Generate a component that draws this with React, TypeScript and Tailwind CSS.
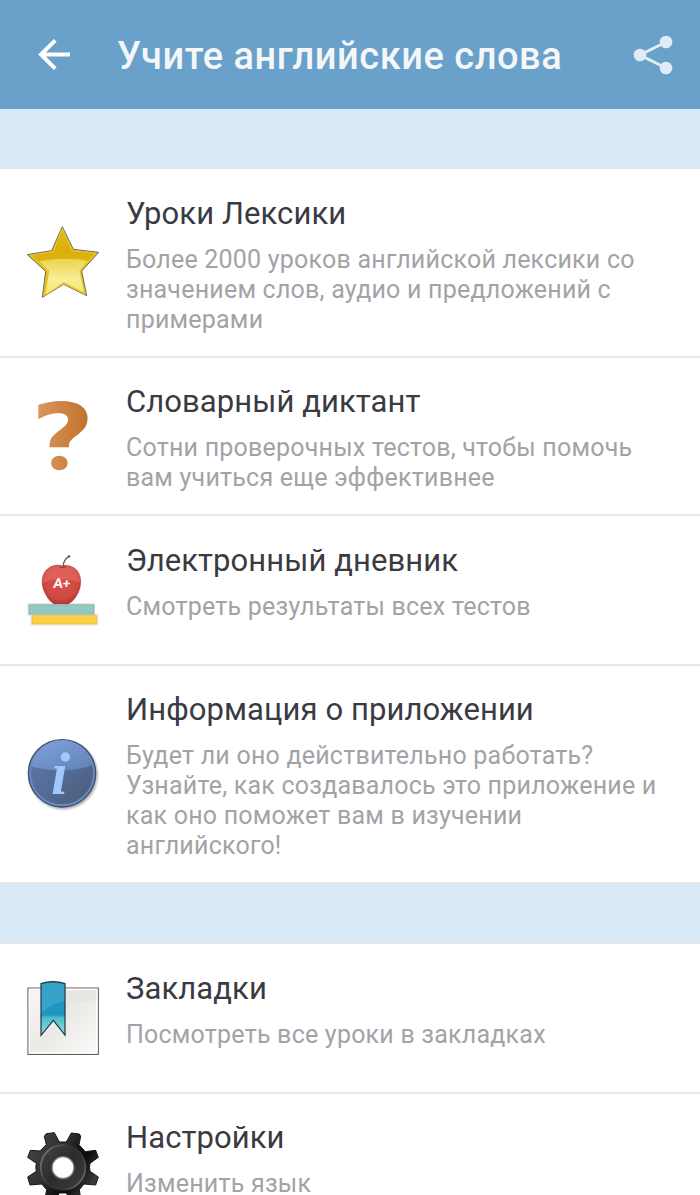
import type { ReactNode } from 'react';

interface MenuRowProps {
  icon: ReactNode;
  title: string;
  children: ReactNode;
}

function BackIcon() {
  return (
    <svg viewBox="0 0 32 32" className="h-8 w-8" fill="none" stroke="#fff" strokeWidth="4">
      <path d="M32 15.5H4M17.2 1.4 3 15.5l14.2 14.2" />
    </svg>
  );
}

function ShareIcon() {
  return (
    <svg viewBox="0 0 40 40" className="h-10 w-10" fill="#e0ecf5" stroke="#e0ecf5">
      <path d="M33 7 7 20l26 13" fill="none" strokeWidth="3" />
      <circle cx="33" cy="7" r="6.3" stroke="none" />
      <circle cx="7" cy="20" r="6.3" stroke="none" />
      <circle cx="33" cy="33" r="6.3" stroke="none" />
    </svg>
  );
}

function StarIcon() {
  return (
    <svg viewBox="51 48 216 216" className="h-[72px] w-[72px] overflow-visible">
      <defs>
        <linearGradient id="star-base" x1="0" y1="0" x2="0" y2="1">
          <stop offset="0" stopColor="#e3bb1e" />
          <stop offset="0.35" stopColor="#dcae08" />
          <stop offset="1" stopColor="#e6c832" />
        </linearGradient>
        <linearGradient id="star-glow" x1="0" y1="0" x2="0" y2="1">
          <stop offset="0" stopColor="#ecd44e" />
          <stop offset="0.5" stopColor="#f8ee96" />
          <stop offset="1" stopColor="#f3e25c" />
        </linearGradient>
        <clipPath id="star-clip">
          <path d="m157 62 26 61 68 9-43 51 14 64-61-30-54 36 10-70-48-47 63-10z" />
        </clipPath>
      </defs>
      <path
        d="m157 50 33 68 76 9-51 56 15 74-69-34-64 39 10-78-55-50 73-12z"
        fill="url(#star-base)"
        stroke="#6b6764"
        strokeWidth="3"
      />
      <path
        d="m157 57 30 64 70 9-47 53 14 68-63-31-58 36 9-73-51-47 68-11z"
        fill="none"
        stroke="#e6c429"
        strokeWidth="4"
      />
      <path d="M50 164q108-34 218-4v110H50z" fill="url(#star-glow)" clipPath="url(#star-clip)" />
    </svg>
  );
}

function QuestionIcon() {
  return (
    <svg viewBox="51 45 216 216" className="h-[72px] w-[72px] overflow-visible">
      <defs>
        <linearGradient id="question-fill" x1="87" y1="0" x2="235" y2="0" gradientUnits="userSpaceOnUse">
          <stop offset="0.05" stopColor="#d99a63" />
          <stop offset="1" stopColor="#c06c26" />
        </linearGradient>
        <linearGradient id="question-text" x1="0" y1="0" x2="1" y2="0">
          <stop offset="0.05" stopColor="#d99a63" />
          <stop offset="1" stopColor="#c06c26" />
        </linearGradient>
        <clipPath id="question-hook">
          <path d="M51 30h216v166H51z" />
        </clipPath>
      </defs>
      <g clipPath="url(#question-hook)">
        <text
          transform="translate(62 255) scale(1.19 1)"
          fontFamily="DejaVu Sans"
          fontWeight="700"
          fontSize="278"
          fill="url(#question-text)"
        >
          ?
        </text>
      </g>
      <ellipse cx="148" cy="234" rx="25" ry="22" fill="url(#question-fill)" />
    </svg>
  );
}

function AppleIcon() {
  return (
    <svg viewBox="51 42 216 216" className="h-[72px] w-[72px] overflow-visible">
      <defs>
        <radialGradient id="apple-fill" cx="0.5" cy="0.45" r="0.6">
          <stop offset="0" stopColor="#dc5049" />
          <stop offset="0.7" stopColor="#cf4943" />
          <stop offset="1" stopColor="#a92f2c" />
        </radialGradient>
      </defs>
      <path d="M55 192h197v32h10v30H64v-29h-9z" fill="none" stroke="#f1ebe4" strokeWidth="7" />
      <path
        d="M157 77c-20-6-39 2-50 15-14 17-13 42-5 61 7 16 17 33 31 39h41c14-5 26-22 33-39 8-20 8-44-5-61-10-12-27-19-45-15z"
        fill="url(#apple-fill)"
        stroke="#a33a36"
        strokeWidth="1"
      />
      <path
        d="M97 130c-1-24 12-45 33-52 9-3 18-2 27 1 10-3 26-1 37 7 13 10 18 25 18 42-32-14-83-16-115 2z"
        fill="#f08078"
        opacity="0.4"
      />
      <path d="M148 81q10 3 20-1" fill="none" stroke="#87332c" strokeWidth="3" />
      <path d="M159 81q1-22 18-32" fill="none" stroke="#6c5b45" strokeWidth="4" />
      <circle cx="177" cy="49" r="3.5" fill="#5a4a39" />
      <text
        transform="translate(129 145) skewX(-6)"
        fontFamily="Lato"
        fontWeight="900"
        fontSize="40"
        fill="#fff"
      >
        A+
      </text>
      <path d="M57 194h195v29H57z" fill="#92c9c3" stroke="#75aaa0" strokeWidth="2" />
      <path d="M66 226h194v26H66z" fill="#fbd045" stroke="#edb336" strokeWidth="2" />
    </svg>
  );
}

function InfoIcon() {
  return (
    <svg viewBox="51 52 216 216" className="h-[72px] w-[72px] overflow-visible">
      <defs>
        <linearGradient id="info-base" x1="0" y1="0" x2="1" y2="1">
          <stop offset="0" stopColor="#5d7bb0" />
          <stop offset="1" stopColor="#4c5c78" />
        </linearGradient>
        <linearGradient id="info-shine" x1="0" y1="0" x2="0.8" y2="1">
          <stop offset="0" stopColor="#7fa3dc" />
          <stop offset="1" stopColor="#6485b8" />
        </linearGradient>
        <radialGradient id="info-shadow">
          <stop offset="0.88" stopColor="#777" stopOpacity="0.7" />
          <stop offset="1" stopColor="#999" stopOpacity="0" />
        </radialGradient>
      </defs>
      <circle cx="160" cy="163" r="109" fill="url(#info-shadow)" />
      <circle cx="156" cy="158" r="101" fill="#6489c4" stroke="#435065" strokeWidth="4" />
      <circle cx="156" cy="158" r="93" fill="url(#info-base)" />
      <path d="M64 137a93 93 0 0 1 183-4c-48 20-130 21-183 4z" fill="url(#info-shine)" />
      <circle cx="166" cy="109" r="14" fill="#a1c7ff" />
      <text
        transform="translate(124 220) scale(0.98 1)"
        fontFamily="Liberation Serif"
        fontWeight="700"
        fontStyle="italic"
        fontSize="182"
        fill="#a1c7ff"
      >
        ı
      </text>
    </svg>
  );
}

function BookmarkIcon() {
  return (
    <svg viewBox="51 51 216 216" className="h-[72px] w-[72px] overflow-visible">
      <defs>
        <linearGradient id="page-fill" x1="0" y1="0" x2="1" y2="1">
          <stop offset="0" stopColor="#f8f7f4" />
          <stop offset="0.5" stopColor="#eceae6" />
          <stop offset="1" stopColor="#fbfaf9" />
        </linearGradient>
        <linearGradient id="ribbon-fill" x1="0" y1="0" x2="0" y2="1">
          <stop offset="0" stopColor="#238eb8" />
          <stop offset="0.62" stopColor="#2196c3" />
          <stop offset="0.67" stopColor="#4dbdcc" />
          <stop offset="1" stopColor="#8fe0df" />
        </linearGradient>
      </defs>
      <path d="M54 69h211v199H54z" fill="url(#page-fill)" stroke="#5f5f5f" strokeWidth="3.5" />
      <path d="M58 73h203v191H58z" fill="none" stroke="#fff" strokeWidth="4" />
      <path d="M166 130q45-22 93-24V76h-93z" fill="#e2dfda" opacity="0.5" />
      <path
        d="M93 56q36-12 72 0v154l-35-44-37 45z"
        fill="url(#ribbon-fill)"
        stroke="#20333d"
        strokeWidth="3.5"
      />
      <path d="M95 58q34-10 68 0v50q-38 8-68 34z" fill="#6ecbe6" opacity="0.3" />
    </svg>
  );
}

function GearIcon() {
  return (
    <svg viewBox="51 64 216 216" className="h-[72px] w-[72px] overflow-visible">
      <defs>
        <linearGradient id="gear-fill" x1="0" y1="0" x2="1" y2="0.6">
          <stop offset="0" stopColor="#4a4a4a" />
          <stop offset="0.45" stopColor="#303030" />
          <stop offset="0.75" stopColor="#090909" />
          <stop offset="1" stopColor="#3b3b3b" />
        </linearGradient>
        <linearGradient id="gear-ring" x1="0" y1="0.2" x2="1" y2="0.8">
          <stop offset="0" stopColor="#808080" />
          <stop offset="0.4" stopColor="#333" />
          <stop offset="0.7" stopColor="#333" />
          <stop offset="1" stopColor="#777" />
        </linearGradient>
        <linearGradient id="gear-face" x1="0" y1="0" x2="1" y2="1">
          <stop offset="0" stopColor="#444" />
          <stop offset="0.5" stopColor="#2b2b2b" />
          <stop offset="1" stopColor="#404040" />
        </linearGradient>
      </defs>
      {/* eight teeth, tapering towards the rim */}
      <path
        d="M109 72 133 69 148 97H169L184 70 208 73 212 80 207 105Q216 115 226 126L257 122 265 143 240 161Q237 173 240 185L265 202 257 226 222 223 208 240 212 267 207 275 184 277 169 250H148L133 277 110 275 105 267 110 240 95 223 60 226 53 202 79 185Q76 173 79 161L53 143 61 122 91 124Q99 113 109 105L103 80Z"
        fill="url(#gear-fill)"
        stroke="#161616"
        strokeWidth="3"
        strokeLinejoin="round"
      />
      <circle cx="159" cy="173" r="67" fill="url(#gear-face)" stroke="url(#gear-ring)" strokeWidth="5" />
      <circle cx="159" cy="174" r="33" fill="#fff" stroke="#777" strokeWidth="4" />
    </svg>
  );
}

function MenuRow({ icon, title, children }: MenuRowProps) {
  return (
    <li className="flex min-h-[149.5px] items-center border-b-2 border-[#e6e8eb] bg-white">
      <div className="flex w-[126px] shrink-0 pl-[27px]">{icon}</div>
      <div className="flex-1 self-stretch pt-[25.5px] pb-[21px]">
        <h2 className="text-[31px] leading-[37px] tracking-[0.09px] text-[#3a3b42]">{title}</h2>
        <p className="mt-[13px] text-[25px] leading-[30px] tracking-[0.22px] whitespace-nowrap text-[#a2a3a7]">
          {children}
        </p>
      </div>
    </li>
  );
}

export default function App() {
  return (
    <div className="flex h-[1195px] w-[700px] flex-col overflow-hidden bg-white font-['Roboto',sans-serif]">
      <header className="flex h-[109px] shrink-0 items-center bg-[#6aa1cb] pr-[27px] pl-[38px]">
        <button type="button" aria-label="Назад">
          <BackIcon />
        </button>
        <h1 className="ml-[47px] flex-1 pt-1 text-[38px] font-medium tracking-[0.53px] whitespace-nowrap text-[#f5f6f8]">
          Учите английские слова
        </h1>
        <button type="button" aria-label="Поделиться">
          <ShareIcon />
        </button>
      </header>

      <div className="h-[60px] shrink-0 border-b-2 border-[#e5e7ea] bg-[#dbeaf7]" />
      <ul className="shrink-0">
        <MenuRow icon={<StarIcon />} title="Уроки Лексики">
          Более 2000 уроков английской лексики со<br />
          значением слов, аудио и предложений с<br />
          примерами
        </MenuRow>
        <MenuRow icon={<QuestionIcon />} title="Словарный диктант">
          Сотни проверочных тестов, чтобы помочь<br />
          вам учиться еще эффективнее
        </MenuRow>
        <MenuRow icon={<AppleIcon />} title="Электронный дневник">
          Смотреть результаты всех тестов
        </MenuRow>
        <MenuRow icon={<InfoIcon />} title="Информация о приложении">
          Будет ли оно действительно работать?<br />
          Узнайте, как создавалось это приложение и<br />
          как оно поможет вам в изучении<br />
          английского!
        </MenuRow>
      </ul>

      <div className="h-[60px] shrink-0 border-b-2 border-[#e5e7ea] bg-[#dbeaf7]" />
      <ul className="shrink-0">
        <MenuRow icon={<BookmarkIcon />} title="Закладки">
          Посмотреть все уроки в закладках
        </MenuRow>
        <MenuRow icon={<GearIcon />} title="Настройки">
          Изменить язык
        </MenuRow>
      </ul>
    </div>
  );
}
